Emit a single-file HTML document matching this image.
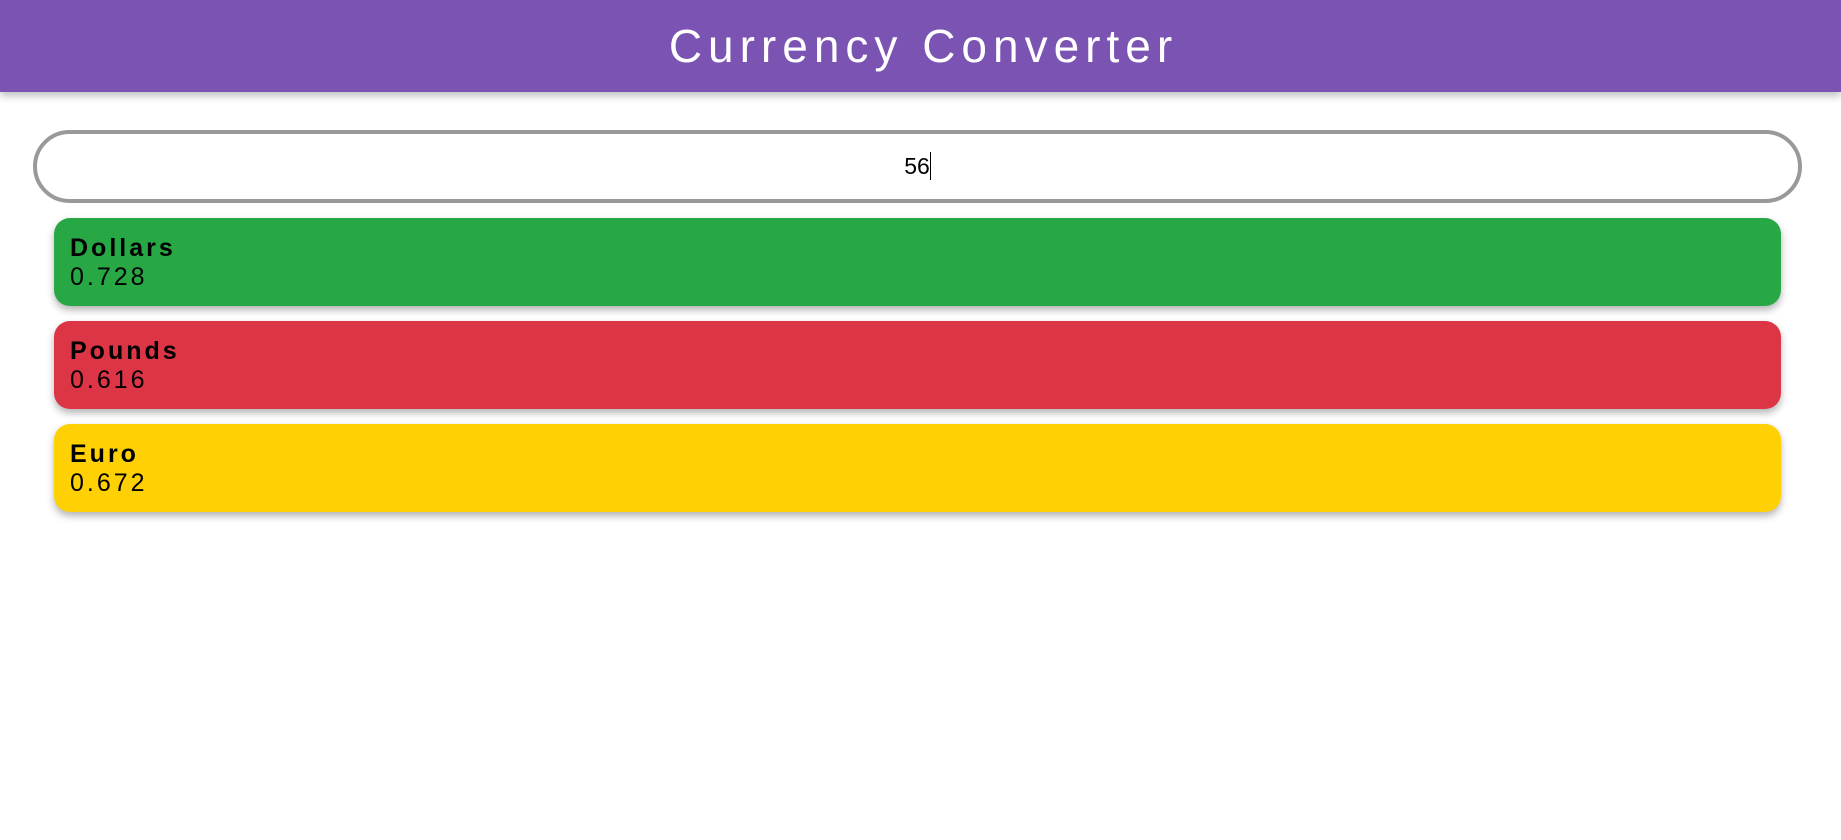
<!DOCTYPE html>
<html><head><style>
html,body{margin:0;padding:0;width:1841px;height:840px;background:#fff;overflow:hidden;font-family:"Liberation Sans",sans-serif}
.hdr{position:absolute;left:0;top:0;width:1841px;height:92px;background:#7b53b2;box-shadow:0 4px 8px rgba(0,0,0,.25);color:#fff;text-align:center;font-size:46px;font-weight:300;line-height:92px;letter-spacing:6px;text-indent:6px}
.inp{position:absolute;left:33px;top:130px;width:1769px;height:73px;box-sizing:border-box;border:4px solid #999;border-radius:37px;text-align:center;font-size:23px;line-height:65px;color:#000}
.cur{display:inline-block;width:1px;height:28px;background:#000;vertical-align:middle;margin-top:-4px}
.card{position:absolute;left:54px;width:1727px;height:88px;border-radius:16px;box-shadow:0 4px 8px rgba(0,0,0,.3);box-sizing:border-box;padding:16px 16px}
.card b{display:block;font-size:25px;letter-spacing:3px;line-height:28px}
.card span{display:block;font-size:25px;letter-spacing:3px;line-height:30px}
</style></head><body>
<div class="hdr">Currency Converter</div>
<div class="inp">56<span class="cur"></span></div>
<div class="card" style="top:218px;background:#28a745"><b>Dollars</b><span>0.728</span></div>
<div class="card" style="top:321px;background:#dc3545"><b>Pounds</b><span>0.616</span></div>
<div class="card" style="top:424px;background:#ffd104"><b>Euro</b><span>0.672</span></div>
</body></html>
